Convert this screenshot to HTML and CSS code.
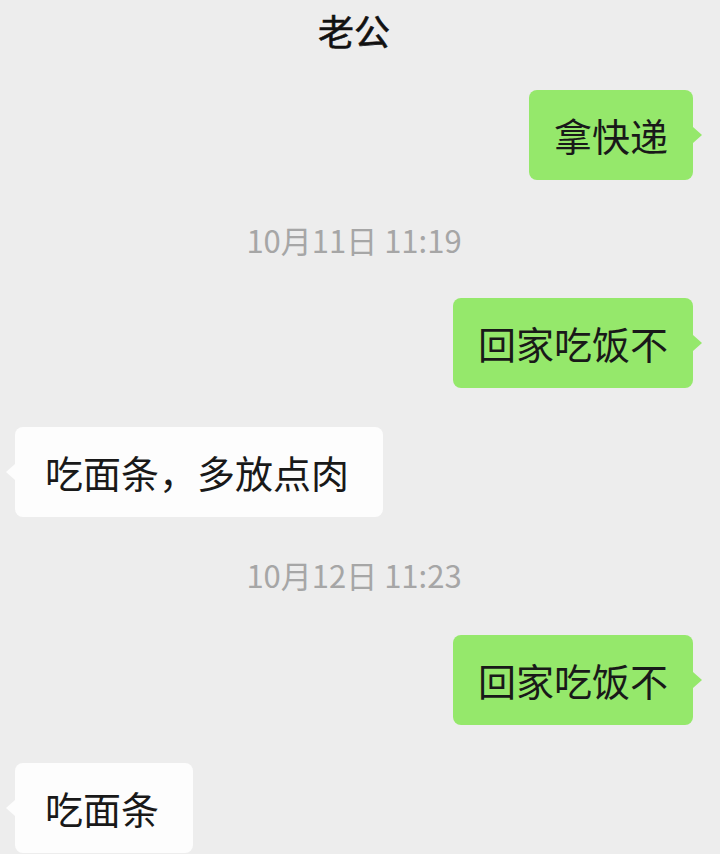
FILE: index.html
```html
<!DOCTYPE html>
<html lang="zh-CN">
<head>
<meta charset="utf-8">
<title>老公</title>
<link rel="stylesheet" href="styles.css">
</head>
<body>
<div class="chat">
  <div class="title">老公</div>
  <div class="row me r1"><div class="bubble green">拿快递</div></div>
  <div class="time t1">10月11日 11:19</div>
  <div class="row me r2"><div class="bubble green">回家吃饭不</div></div>
  <div class="row other r3"><div class="bubble white">吃面条，多放点肉</div></div>
  <div class="time t2">10月12日 11:23</div>
  <div class="row me r4"><div class="bubble green">回家吃饭不</div></div>
  <div class="row other r5"><div class="bubble white">吃面条</div></div>
</div>
</body>
</html>
```
FILE: styles.css
```css
html, body {
  margin: 0;
  padding: 0;
  background: #ededed;
}
body {
  width: 720px;
  height: 854px;
  overflow: hidden;
  font-family: "Noto Sans CJK SC", "Noto Sans", sans-serif;
  color: #191919;
}
.chat {
  display: flex;
  flex-direction: column;
  padding: 0 27px 0 15px;
}
.title {
  height: 60px;
  line-height: 60px;
  text-align: center;
  font-size: 36px;
  font-weight: 400;
  color: #111;
  -webkit-text-stroke: 0.6px #111;
}
.row {
  display: flex;
}
.row.me { justify-content: flex-end; }
.row.other { justify-content: flex-start; }
.r1 { margin-top: 30px; }
.r2 { margin-top: 38px; }
.r3 { margin-top: 39px; }
.r4 { margin-top: 40px; }
.r5 { margin-top: 38px; }
.bubble {
  position: relative;
  height: 90px;
  box-sizing: border-box;
  padding: 0 25px;
  line-height: 90px;
  font-size: 38px;
  border-radius: 8px;
}
.bubble.green {
  background: #95e86b;
}
.bubble.white {
  background: #fdfdfd;
  padding: 0 34px 0 30px;
}
.bubble.green::after {
  content: "";
  position: absolute;
  right: -9px;
  top: 37px;
  border-left: 9px solid #95e86b;
  border-top: 8px solid transparent;
  border-bottom: 8px solid transparent;
}
.bubble.white::before {
  content: "";
  position: absolute;
  left: -9px;
  top: 37px;
  border-right: 9px solid #fdfdfd;
  border-top: 8px solid transparent;
  border-bottom: 8px solid transparent;
}
.time {
  height: 40px;
  line-height: 40px;
  text-align: center;
  font-size: 31px;
  color: #a6a6a6;
}
.t1 { margin-top: 40px; }
.t2 { margin-top: 38px; }
```
